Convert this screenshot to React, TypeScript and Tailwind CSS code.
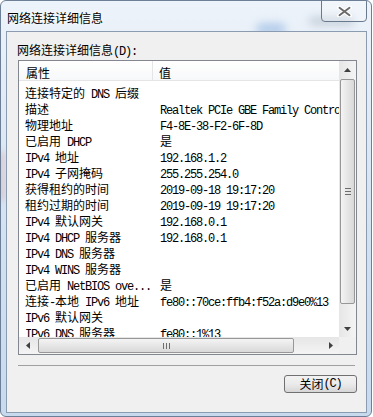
import React from 'react';

const ROWS: [string, string][] = [
  ['连接特定的 DNS 后缀', ''],
  ['描述', 'Realtek PCIe GBE Family Controller'],
  ['物理地址', 'F4-8E-38-F2-6F-8D'],
  ['已启用 DHCP', '是'],
  ['IPv4 地址', '192.168.1.2'],
  ['IPv4 子网掩码', '255.255.254.0'],
  ['获得租约的时间', '2019-09-18 19:17:20'],
  ['租约过期的时间', '2019-09-19 19:17:20'],
  ['IPv4 默认网关', '192.168.0.1'],
  ['IPv4 DHCP 服务器', '192.168.0.1'],
  ['IPv4 DNS 服务器', ''],
  ['IPv4 WINS 服务器', ''],
  ['已启用 NetBIOS ove...', '是'],
  ['连接-本地 IPv6 地址', 'fe80::70ce:ffb4:f52a:d9e0%13'],
  ['IPv6 默认网关', ''],
  ['IPv6 DNS 服务器', 'fe80::1%13'],
];

// SimSun-like mix: latin runs are half width (6px), CJK 12px
const Mix = ({ text }: { text: string }) => {
  const parts = text.split(/([\x20-\x7e]+)/).filter(Boolean);
  return (
    <>
      {parts.map((p, i) =>
        /^[\x20-\x7e]+$/.test(p) ? (
          <span key={i} className="font-['Liberation_Mono',monospace] text-[12px] tracking-[-1.2px] whitespace-pre">
            {p}
          </span>
        ) : (
          <span key={i}>{p}</span>
        )
      )}
    </>
  );
};

const Arrow = ({ dir }: { dir: 'up' | 'down' | 'left' | 'right' }) => {
  const pts = {
    up: '0,4 3.5,0 7,4',
    down: '0,0 3.5,4 7,0',
    left: '4,0 0,3.5 4,7',
    right: '0,0 4,3.5 0,7',
  }[dir];
  const vert = dir === 'up' || dir === 'down';
  return (
    <svg width={vert ? 7 : 4} height={vert ? 4 : 7} viewBox={vert ? '0 0 7 4' : '0 0 4 7'}>
      <polygon points={pts} fill="#404040" />
    </svg>
  );
};

export default function App() {
  return (
    <div className="w-[373px] h-[417px] overflow-hidden bg-white font-['Noto_Sans_CJK_SC',sans-serif] text-[12px] text-black">
      <div className="relative w-[372px] h-[417px] rounded-[6px] border border-[#6d7f96] bg-gradient-to-b from-[#edf3fa] via-[#d5e3f2] to-[#c7daee] overflow-hidden">
        {/* aero glass blur blobs */}
        <div className="absolute left-[255px] top-[22px] w-[30px] h-[12px] rounded-full bg-[#7fa9dc] opacity-50 blur-[4px]" />
        <div className="absolute left-[308px] top-[16px] w-[45px] h-[8px] rounded-full bg-[#8d99a8] opacity-40 blur-[4px]" />
        <div className="absolute left-[-4px] top-[150px] w-[8px] h-[50px] rounded-full bg-[#e0a0a0] opacity-40 blur-[3px]" />

        {/* title bar */}
        <div className="relative flex h-[30px] items-start">
          <div className="ml-[6px] mt-[9px] leading-[16px] text-[12px] text-black [text-shadow:0_0_6px_#fff,0_0_3px_#fff]">
            网络连接详细信息
          </div>
          <div className="ml-auto mr-[4px] -mt-[1px] flex h-[22px] w-[46px] items-center justify-center rounded-b-[4px] border border-[#6a7a8e] bg-[#ffffff]/25">
            <svg width="15" height="11" viewBox="0 0 15 11">
              <path d="M2 1.5 L13 9.5 M13 1.5 L2 9.5" stroke="#ffffff" strokeWidth="4" strokeLinecap="round" />
              <path d="M2.5 1.8 L12.5 9.2 M12.5 1.8 L2.5 9.2" stroke="#6c6c6c" strokeWidth="2" strokeLinecap="round" />
            </svg>
          </div>
        </div>

        {/* client area */}
        <div className="relative ml-[5px] w-[361px] h-[382px] border border-[#8c9cb0] bg-[#f0f0f0] flex flex-col">
          <div className="ml-[10px] mt-[10px] h-[16px] leading-[16px]">
            <Mix text="网络连接详细信息(D):" />
          </div>

          {/* list box */}
          <div className="ml-[11px] mt-[2px] w-[339px] h-[295px] border border-[#828790] bg-white grid grid-cols-[320px_17px] grid-rows-[276px_17px]">
            <div className="overflow-hidden">
              <div className="flex h-[20px] bg-gradient-to-b from-white to-[#f7f8fa] border-b border-[#e5e5e5]">
                <div className="w-[134px] pl-[7px] pt-[4px] leading-[16px] border-r border-[#e5e5e5]">属性</div>
                <div className="pl-[6px] pt-[4px] leading-[16px]">值</div>
              </div>
              <div className="pt-[4px]">
                {ROWS.map(([k, v], i) => (
                  <div key={i} className="flex h-[16px] leading-[16px] whitespace-nowrap">
                    <div className="w-[135px] shrink-0 pl-[6px] overflow-hidden">
                      <Mix text={k} />
                    </div>
                    <div className="pl-[6px]">
                      <Mix text={v} />
                    </div>
                  </div>
                ))}
              </div>
            </div>

            {/* vertical scrollbar */}
            <div className="flex flex-col bg-gradient-to-r from-[#e6e6e6] to-[#f4f4f4]">
              <div className="flex h-[17px] items-center justify-center">
                <Arrow dir="up" />
              </div>
              <div className="mx-[1px] mt-[1px] h-[225px] rounded-[2px] border border-[#979797] bg-gradient-to-r from-[#f4f4f4] to-[#d9d9d9] flex items-center justify-center">
                <div className="flex flex-col gap-[2px]">
                  <div className="w-[6px] h-px bg-[#6d6d6d]" />
                  <div className="w-[6px] h-px bg-[#6d6d6d]" />
                  <div className="w-[6px] h-px bg-[#6d6d6d]" />
                </div>
              </div>
              <div className="mt-auto flex h-[17px] items-center justify-center">
                <Arrow dir="down" />
              </div>
            </div>

            {/* horizontal scrollbar */}
            <div className="flex items-center bg-gradient-to-b from-[#e6e6e6] to-[#f4f4f4]">
              <div className="flex w-[17px] h-[17px] items-center justify-center">
                <Arrow dir="left" />
              </div>
              <div className="ml-[2px] h-[15px] w-[256px] rounded-[2px] border border-[#979797] bg-gradient-to-b from-[#f4f4f4] to-[#d9d9d9] flex items-center justify-center">
                <div className="flex gap-[2px]">
                  <div className="w-px h-[6px] bg-[#6d6d6d]" />
                  <div className="w-px h-[6px] bg-[#6d6d6d]" />
                  <div className="w-px h-[6px] bg-[#6d6d6d]" />
                </div>
              </div>
              <div className="ml-auto flex w-[17px] h-[17px] items-center justify-center">
                <Arrow dir="right" />
              </div>
            </div>
            <div className="bg-[#f0f0f0]" />
          </div>

          {/* separator */}
          <div className="ml-[11px] mt-[10px] w-[337px] h-px bg-[#a0a0a0]" />

          <div className="mt-[9px] flex justify-end pr-[9px]">
            <button className="w-[73px] h-[18px] rounded-[3px] border border-[#707070] bg-gradient-to-b from-[#f2f2f2] via-[#ebebeb] to-[#d6d6d6] leading-[16px] text-[12px] flex items-center justify-center">
              <Mix text="关闭(C)" />
            </button>
          </div>
        </div>
      </div>
    </div>
  );
}
